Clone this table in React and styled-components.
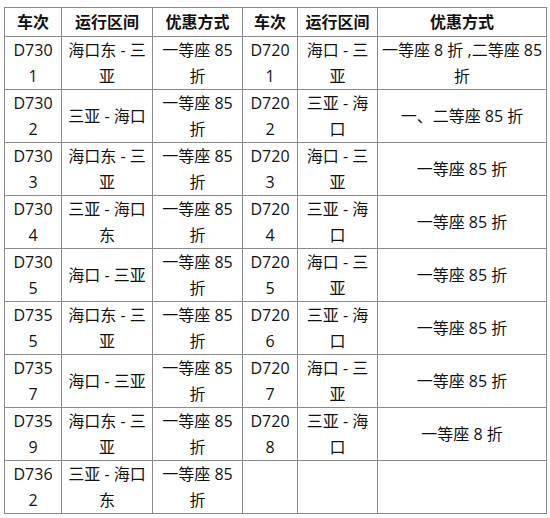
import styled, { createGlobalStyle } from "styled-components";

const GlobalStyle = createGlobalStyle`
  html, body {
    margin: 0;
    padding: 0;
    background: #fff;
  }
`;

const Page = styled.div`
  padding: 7px 4px;
  font-family: "Open Sans", "Noto Sans CJK SC", sans-serif;
  font-size: 16px;
  color: #111;
`;

const Table = styled.div`
  display: grid;
  grid-template-columns: 56px 90px 89px 54px 79px 168px;
  grid-auto-rows: 52px;
  grid-template-rows: 28px;
  gap: 1px;
  width: max-content;
  border: 1px solid #8a8a8a;
  background: #8a8a8a;
`;

const Cell = styled.div`
  background: #fff;
  display: flex;
  flex-direction: column;
  align-items: center;
  justify-content: center;
  font-weight: ${(p) => (p.$head ? 700 : 400)};
`;

const Line = styled.span`
  display: block;
  text-align: center;
  white-space: nowrap;
  line-height: 26px;
`;

const headers = ["车次", "运行区间", "优惠方式", "车次", "运行区间", "优惠方式"];

// "|" marks where the line wraps in the cell
const rows = [
  ["D730|1", "海口东 - 三|亚", "一等座 85|折", "D720|1", "海口 - 三|亚", "一等座 8 折 ,二等座 85|折"],
  ["D730|2", "三亚 - 海口", "一等座 85|折", "D720|2", "三亚 - 海|口", "一、二等座 85 折"],
  ["D730|3", "海口东 - 三|亚", "一等座 85|折", "D720|3", "海口 - 三|亚", "一等座 85 折"],
  ["D730|4", "三亚 - 海口|东", "一等座 85|折", "D720|4", "三亚 - 海|口", "一等座 85 折"],
  ["D730|5", "海口 - 三亚", "一等座 85|折", "D720|5", "海口 - 三|亚", "一等座 85 折"],
  ["D735|5", "海口东 - 三|亚", "一等座 85|折", "D720|6", "三亚 - 海|口", "一等座 85 折"],
  ["D735|7", "海口 - 三亚", "一等座 85|折", "D720|7", "海口 - 三|亚", "一等座 85 折"],
  ["D735|9", "海口东 - 三|亚", "一等座 85|折", "D720|8", "三亚 - 海|口", "一等座 8 折"],
  ["D736|2", "三亚 - 海口|东", "一等座 85|折", "", "", ""],
];

const CellText = ({ text, head }) => (
  <Cell $head={head}>
    {text
      .split("|")
      .filter((s) => s.length)
      .map((line, i) => (
        <Line key={i}>{line}</Line>
      ))}
  </Cell>
);

const App = () => {
  return (
    <Page>
      <GlobalStyle />
      <Table>
        {headers.map((h, i) => (
          <CellText key={"h" + i} text={h} head />
        ))}
        {rows.map((row, r) =>
          row.map((text, c) => <CellText key={r + "-" + c} text={text} />)
        )}
      </Table>
    </Page>
  );
};

export default App;
